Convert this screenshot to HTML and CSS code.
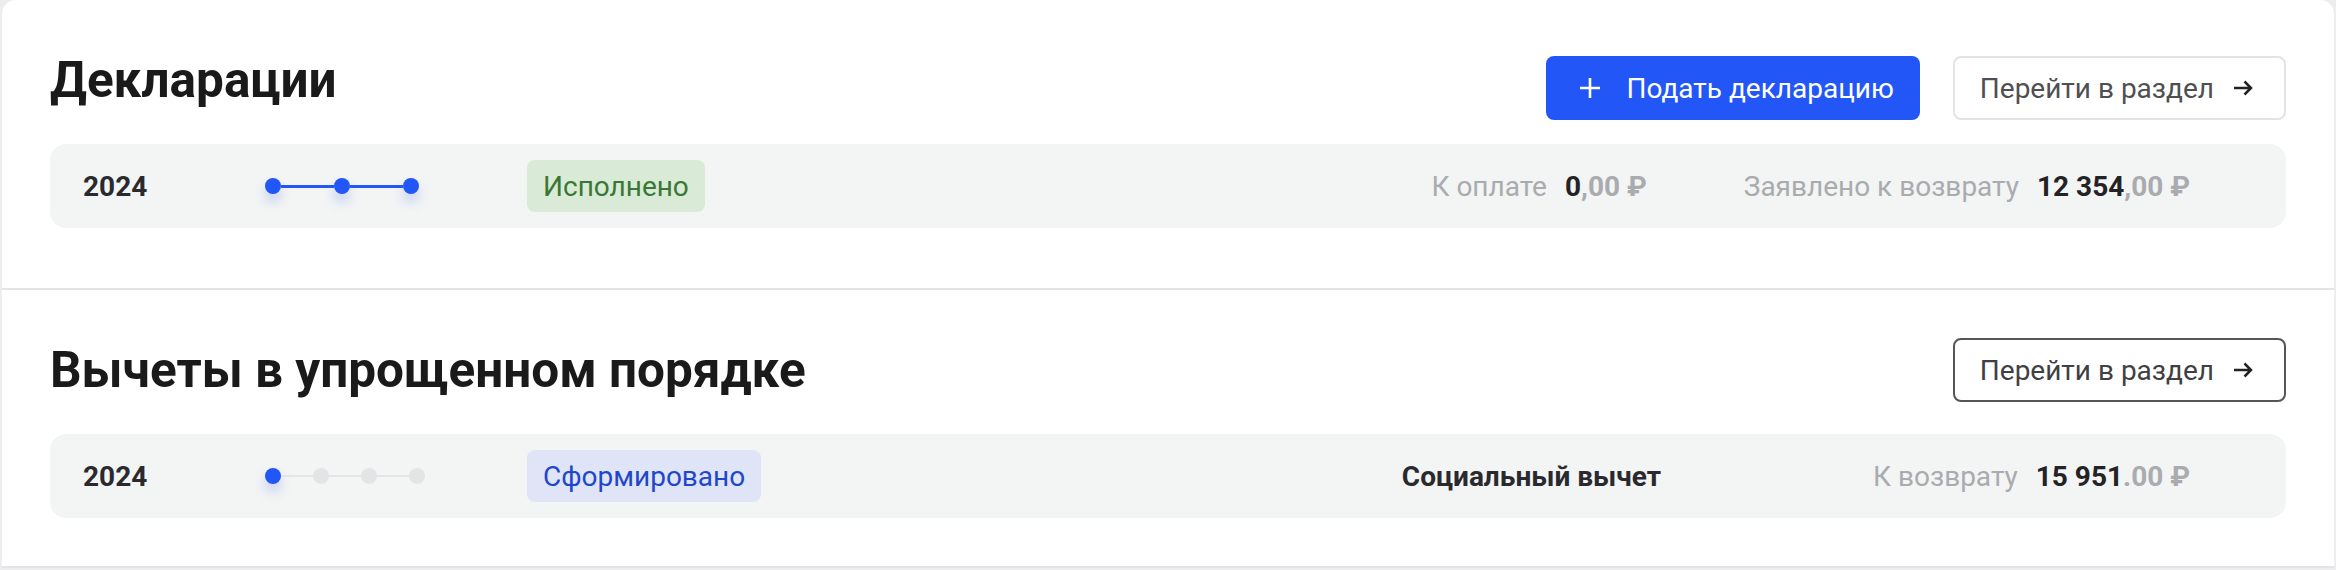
FILE: index.html
```html
<!DOCTYPE html>
<html>
<head>
<meta charset="UTF-8">
<meta name="viewport" content="width=device-width, initial-scale=1.0">
<title>Декларации</title>
<link rel="stylesheet" href="styles.css">
</head>
<body>
<div class="panel">
	<section class="block block--decl">
		<div class="block-head">
			<h2 class="block-title">Декларации</h2>
			<div class="block-actions">
				<button class="btn btn--primary">
					<svg class="btn-icon" width="22" height="22" viewBox="0 0 22 22"><path d="M11 1v20M1 11h20" stroke="#fff" stroke-width="2.6" fill="none"/></svg>
					Подать декларацию
				</button>
				<button class="btn btn--light">
					Перейти в раздел
					<svg class="btn-icon" width="20" height="20" viewBox="0 0 20 20"><path d="M1 10h17M11.5 3.5l6.5 6.5-6.5 6.5" stroke="#222" stroke-width="2.5" fill="none"/></svg>
				</button>
			</div>
		</div>
		<div class="item">
			<span class="item-year">2024</span>
			<div class="item-steps">
				<div class="steps steps--long">
					<i class="step step--on"></i><i class="step-line step-line--on"></i>
					<i class="step step--on"></i><i class="step-line step-line--on"></i>
					<i class="step step--on"></i>
				</div>
			</div>
			<span class="badge badge--done">Исполнено</span>
			<div class="item-sums item-sums--decl">
				<div class="sum"><span class="sum-label">К оплате</span><span class="sum-value">0<span class="sum-minor">,00 ₽</span></span></div>
				<div class="sum"><span class="sum-label">Заявлено к возврату</span><span class="sum-value">12 354<span class="sum-minor">,00 ₽</span></span></div>
			</div>
		</div>
	</section>
	<section class="block block--ded">
		<div class="block-head">
			<h2 class="block-title">Вычеты в упрощенном порядке</h2>
			<div class="block-actions">
				<button class="btn btn--outline">
					Перейти в раздел
					<svg class="btn-icon" width="20" height="20" viewBox="0 0 20 20"><path d="M1 10h17M11.5 3.5l6.5 6.5-6.5 6.5" stroke="#222" stroke-width="2.5" fill="none"/></svg>
				</button>
			</div>
		</div>
		<div class="item">
			<span class="item-year">2024</span>
			<div class="item-steps">
				<div class="steps">
					<i class="step step--on"></i><i class="step-line"></i>
					<i class="step"></i><i class="step-line"></i>
					<i class="step"></i><i class="step-line"></i>
					<i class="step"></i>
				</div>
			</div>
			<span class="badge badge--made">Сформировано</span>
			<div class="item-sums item-sums--ded">
				<span class="item-kind">Социальный вычет</span>
				<div class="sum"><span class="sum-label">К возврату</span><span class="sum-value">15 951<span class="sum-minor">.00 ₽</span></span></div>
			</div>
		</div>
	</section>
</div>
</body>
</html>
```

FILE: styles.css
```css
*{
	margin: 0;
	padding: 0;
	box-sizing: border-box;
}
body {
	background: #ededf0;
	font-family: "Roboto", "Inter", sans-serif;
	color: #1b1b1d;
}
.panel {
	margin: 0 2px;
	background: #fff;
	border-radius: 14px 14px 0 0;
	overflow: hidden;
}
.block {
	padding: 48px 48px 0 48px;
	border-bottom: 2px solid #e4e4e6;
}
.block--decl {
	padding-bottom: 60px;
}
.block--ded {
	padding-bottom: 48px;
}
.block-head {
	display: flex;
	align-items: flex-start;
	justify-content: space-between;
}
.block-title {
	margin-top: 4px;
	font-size: 49.5px;
	line-height: 56px;
	font-weight: 700;
	color: #1a1a1a;
}
.block--decl .block-actions {
	margin-top: 8px;
}
.block-actions {
	display: flex;
	gap: 33px;
}
.btn {
	display: flex;
	align-items: center;
	height: 64px;
	border-radius: 8px;
	font-family: inherit;
	font-size: 28px;
	cursor: pointer;
}
.btn--primary {
	padding: 0 26px 0 33px;
	gap: 25px;
	background: #2356f6;
	border: 0;
	color: #fff;
}
.btn--light,
.btn--outline {
	padding: 0 31px 0 25px;
	gap: 19px;
	background: #fff;
	color: #4f4f52;
}
.btn--light {
	border: 2px solid #e4e4e6;
}
.btn--outline {
	border: 2px solid #55565a;
	color: #3f4043;
}
.btn-icon {
	display: block;
	flex: none;
}

.block--decl .item {
	margin-top: 24px;
}
.block--ded .item {
	margin-top: 32px;
}
.item {
	display: flex;
	align-items: center;
	height: 84px;
	padding: 0 96px 0 33px;
	background: #f3f4f4;
	border-radius: 16px;
}
.item-year {
	width: 182px;
	font-size: 28px;
	font-weight: 700;
	color: #2a2a2e;
}
.item-steps {
	width: 262px;
}
.steps {
	display: flex;
	align-items: center;
}
.step {
	width: 16px;
	height: 16px;
	border-radius: 50%;
	background: #e3e4e6;
	flex: none;
}
.step--on {
	background: #2356f6;
	box-shadow: 0 8px 12px rgba(35, 86, 246, 0.22);
}
.step-line {
	width: 32px;
	height: 2px;
	background: #e4e5e7;
	flex: none;
}
.steps--long .step-line {
	width: 53px;
}
.step-line--on {
	background: #2356f6;
	height: 3px;
}
.badge {
	display: flex;
	align-items: center;
	height: 52px;
	padding: 0 16px;
	border-radius: 8px;
	font-size: 28px;
}
.badge--done {
	background: #d9ebd7;
	color: #3a7734;
}
.badge--made {
	background: #dfe5f6;
	color: #1f47cc;
}
.item-sums {
	margin-left: auto;
	display: flex;
	align-items: center;
}
.item-sums--decl {
	gap: 97px;
}
.item-sums--ded {
	gap: 212px;
}
.item-kind {
	font-size: 28px;
	font-weight: 700;
	color: #2a2a2e;
}
.sum {
	display: flex;
	align-items: baseline;
	gap: 18px;
	font-size: 28px;
}
.sum-label {
	color: #a9abaf;
}
.sum-value {
	font-weight: 700;
	color: #232326;
}
.sum-minor {
	color: #a9abaf;
}
```
